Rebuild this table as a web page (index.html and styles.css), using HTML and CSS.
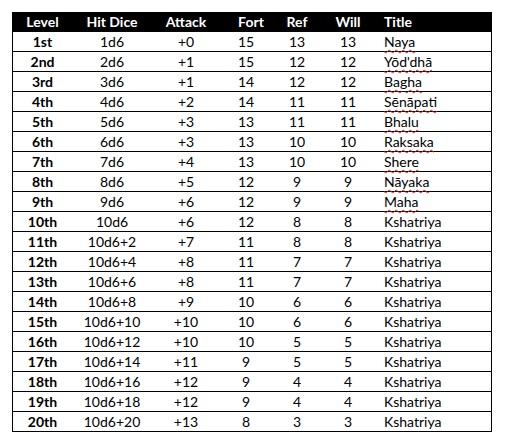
FILE: index.html
```html
<!DOCTYPE html>
<html>
<head>
<meta charset="utf-8">
<link rel="stylesheet" href="styles.css">
</head>
<body>
<div class="table">
  <div class="row head">
    <div>Level</div><div>Hit Dice</div><div>Attack</div><div class="fort-h">Fort</div><div>Ref</div><div>Will</div><div class="title">Title</div>
  </div>
  <div class="row"><div class="lvl">1st</div><div>1d6</div><div>+0</div><div>15</div><div>13</div><div>13</div><div class="title"><span class="sp">Naya</span></div></div>
  <div class="row"><div class="lvl">2nd</div><div>2d6</div><div>+1</div><div>15</div><div>12</div><div>12</div><div class="title"><span class="sp">Yōd'dhā</span></div></div>
  <div class="row"><div class="lvl">3rd</div><div>3d6</div><div>+1</div><div>14</div><div>12</div><div>12</div><div class="title"><span class="sp">Bagha</span></div></div>
  <div class="row"><div class="lvl">4th</div><div>4d6</div><div>+2</div><div>14</div><div>11</div><div>11</div><div class="title"><span class="sp">Sēnāpati</span></div></div>
  <div class="row"><div class="lvl">5th</div><div>5d6</div><div>+3</div><div>13</div><div>11</div><div>11</div><div class="title"><span class="sp">Bhalu</span></div></div>
  <div class="row"><div class="lvl">6th</div><div>6d6</div><div>+3</div><div>13</div><div>10</div><div>10</div><div class="title"><span class="sp">Raksaka</span></div></div>
  <div class="row"><div class="lvl">7th</div><div>7d6</div><div>+4</div><div>13</div><div>10</div><div>10</div><div class="title"><span class="sp">Shere</span></div></div>
  <div class="row"><div class="lvl">8th</div><div>8d6</div><div>+5</div><div>12</div><div>9</div><div>9</div><div class="title"><span class="sp">Nāyaka</span></div></div>
  <div class="row"><div class="lvl">9th</div><div>9d6</div><div>+6</div><div>12</div><div>9</div><div>9</div><div class="title"><span class="sp">Maha</span></div></div>
  <div class="row"><div class="lvl">10th</div><div>10d6</div><div>+6</div><div>12</div><div>8</div><div>8</div><div class="title">Kshatriya</div></div>
  <div class="row"><div class="lvl">11th</div><div>10d6+2</div><div>+7</div><div>11</div><div>8</div><div>8</div><div class="title">Kshatriya</div></div>
  <div class="row"><div class="lvl">12th</div><div>10d6+4</div><div>+8</div><div>11</div><div>7</div><div>7</div><div class="title">Kshatriya</div></div>
  <div class="row"><div class="lvl">13th</div><div>10d6+6</div><div>+8</div><div>11</div><div>7</div><div>7</div><div class="title">Kshatriya</div></div>
  <div class="row"><div class="lvl">14th</div><div>10d6+8</div><div>+9</div><div>10</div><div>6</div><div>6</div><div class="title">Kshatriya</div></div>
  <div class="row"><div class="lvl">15th</div><div>10d6+10</div><div>+10</div><div>10</div><div>6</div><div>6</div><div class="title">Kshatriya</div></div>
  <div class="row"><div class="lvl">16th</div><div>10d6+12</div><div>+10</div><div>10</div><div>5</div><div>5</div><div class="title">Kshatriya</div></div>
  <div class="row"><div class="lvl">17th</div><div>10d6+14</div><div>+11</div><div>9</div><div>5</div><div>5</div><div class="title">Kshatriya</div></div>
  <div class="row"><div class="lvl">18th</div><div>10d6+16</div><div>+12</div><div>9</div><div>4</div><div>4</div><div class="title">Kshatriya</div></div>
  <div class="row"><div class="lvl">19th</div><div>10d6+18</div><div>+12</div><div>9</div><div>4</div><div>4</div><div class="title">Kshatriya</div></div>
  <div class="row"><div class="lvl">20th</div><div>10d6+20</div><div>+13</div><div>8</div><div>3</div><div>3</div><div class="title">Kshatriya</div></div>
</div>
</body>
</html>
```
FILE: styles.css
```css
html, body {
  margin: 0;
  padding: 0;
  background: #ffffff;
}
body {
  font-family: Lato, "Liberation Sans", sans-serif;
  font-size: 14px;
  color: #000000;
}
.table {
  margin: 12px 0 0 12px;
  width: 480px;
  box-sizing: border-box;
  border-left: 1px solid #000;
  border-right: 1px solid #000;
}
.row {
  display: grid;
  grid-template-columns: 59px 80px 68px 52px 50px 52px 1fr;
  height: 20px;
  box-sizing: border-box;
  border-bottom: 1px solid #000;
  align-items: center;
  line-height: 19px;
}
.row > div {
  text-align: center;
  white-space: nowrap;
}
.row > .title {
  text-align: left;
  padding-left: 10px;
}
.row > .fort-h {
  padding-left: 10px;
}
.head {
  background: #000;
  color: #fff;
  font-weight: bold;
}
.lvl {
  font-weight: bold;
}
.sp {
  text-decoration: underline wavy #e02020;
  text-decoration-thickness: 1px;
  text-underline-offset: 2px;
}
```
